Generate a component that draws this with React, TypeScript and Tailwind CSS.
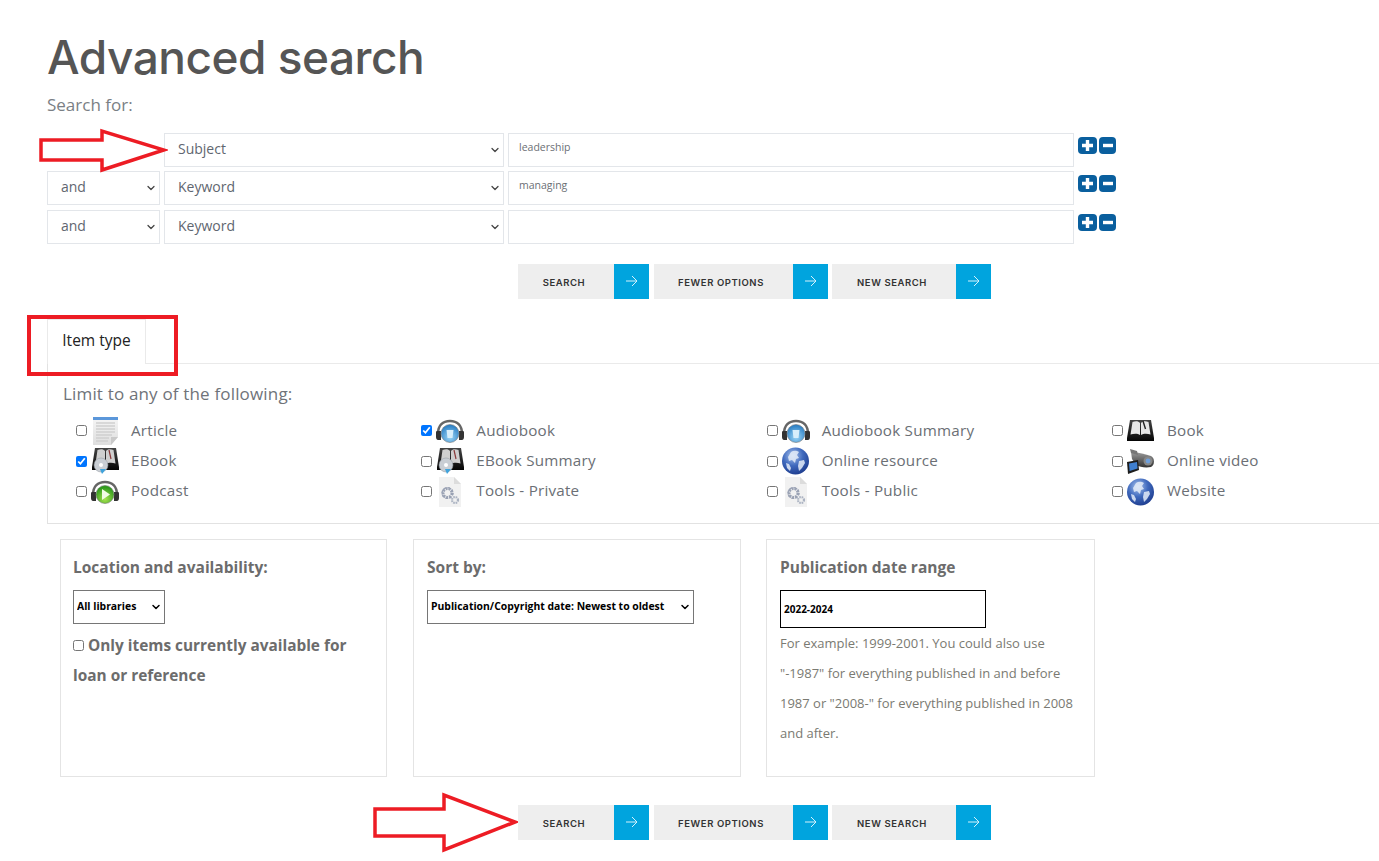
import { ChevronDown } from "lucide-react";

const bodyFont = "font-['Open_Sans','Noto_Sans',sans-serif]";

function IconDefs() {
  return (
    <svg className="absolute h-0 w-0" aria-hidden="true">
      <defs>
        <radialGradient id="globeFill" cx="40%" cy="30%" r="75%">
          <stop offset="0%" stopColor="#a9c4ee" />
          <stop offset="50%" stopColor="#3f69bd" />
          <stop offset="100%" stopColor="#1c3a8c" />
        </radialGradient>
        <radialGradient id="blueCup" cx="50%" cy="70%" r="65%">
          <stop offset="0%" stopColor="#9cd6f7" />
          <stop offset="100%" stopColor="#2b7fc4" />
        </radialGradient>
        <radialGradient id="greenCup" cx="50%" cy="75%" r="65%">
          <stop offset="0%" stopColor="#a6e34f" />
          <stop offset="100%" stopColor="#2f9a1d" />
        </radialGradient>
        <linearGradient id="bookFill" x1="0" y1="0" x2="0" y2="1">
          <stop offset="0%" stopColor="#444" />
          <stop offset="100%" stopColor="#050505" />
        </linearGradient>
        <linearGradient id="paperFill" x1="0" y1="0" x2="0" y2="1">
          <stop offset="0%" stopColor="#f6f6f6" />
          <stop offset="100%" stopColor="#dedede" />
        </linearGradient>
        <linearGradient id="camFill" x1="0" y1="0" x2="0" y2="1">
          <stop offset="0%" stopColor="#9a9a9a" />
          <stop offset="100%" stopColor="#333" />
        </linearGradient>
      </defs>
    </svg>
  );
}

function ArticleIcon() {
  return (
    <svg width="27" height="28" viewBox="0 0 27 28">
      <path d="M1 0h25v20l-7 8H1z" fill="url(#paperFill)" />
      <path d="M1 0h25v3H1z" fill="#5b97da" />
      <path d="M4 6h19M4 9h19M4 12h19M4 15h19M4 18h16M4 21h13M4 24h12" stroke="#cfcfcf" strokeWidth="1.4" />
      <path d="M26 20l-7 8v-8z" fill="#c9c9c9" />
    </svg>
  );
}

function BookIcon() {
  return (
    <svg width="27" height="21" viewBox="0 0 27 21">
      <path d="M3 0h21l3 18v3H0v-3z" fill="url(#bookFill)" />
      <path d="M5.500 2c3-1 6-1 7.500 1v12c-2-1.500-6-1.500-9.500-.5zM21.500 2c-3-1-6-1-7.500 1v12c2-1.500 6.500-1.500 9.500-.5z" fill="#e6e6e6" />
      <path d="M16 1l2.500 8" stroke="#222" strokeWidth="1.4" />
    </svg>
  );
}

function EBookIcon() {
  return (
    <svg width="27" height="26" viewBox="0 0 27 26">
      <path d="M3 0h21l3 19v3H0v-3z" fill="url(#bookFill)" />
      <path d="M5.500 2c3-1 6-1 7.500 1v13c-2-1.500-6-1.500-9.500-.5zM21.500 2c-3-1-6-1-7.500 1v13c2-1.500 6.500-1.500 9.500-.5z" fill="#cfcfcf" />
      <path d="M17 2l2 9" stroke="#8a3a3a" strokeWidth="1.2" />
      <circle cx="9" cy="17" r="7" fill="#c9ced4" stroke="#8c949c" strokeWidth="0.5" />
      <circle cx="9" cy="17" r="2" fill="#fff" />
      <path d="M8 21l6 0-4 5z" fill="#3fa3dc" />
    </svg>
  );
}

function HeadphonesIcon({ variant }: { variant: "blue" | "green" }) {
  return (
    <svg width="28" height="24" viewBox="0 0 28 24">
      <path d="M2 15C2 6 7 2 14 2s12 4 12 13" fill="none" stroke="#666" strokeWidth="2.6" />
      <path d="M1 12h4v9H2c-1 0-2-1-2-3v-4c0-1 0-2 1-2zM27 12h-4v9h3c1 0 2-1 2-3v-4c0-1 0-2-1-2z" fill="#333" />
      <circle cx="14" cy="14.500" r="9" fill={variant === "blue" ? "url(#blueCup)" : "url(#greenCup)"} stroke="#777" strokeWidth="0.6" />
      {variant === "blue" ? (
        <path d="M10.500 11h7l-1 8h-5z" fill="#d7eefb" />
      ) : (
        <path d="M11 9l8 5.500-8 5.500z" fill="#f2fbe4" />
      )}
    </svg>
  );
}

function GearsIcon() {
  return (
    <svg width="24" height="30" viewBox="0 0 24 30">
      <path d="M1 0h15l7 7v23H1z" fill="#f1f1f1" />
      <path d="M16 0l7 7h-7z" fill="#dcdcdc" />
      <circle cx="9.500" cy="16" r="4.500" fill="none" stroke="#9aa2b4" strokeWidth="3" strokeDasharray="2.2 0.9" />
      <circle cx="9.500" cy="16" r="5.400" fill="none" stroke="#9aa2b4" strokeWidth="1.4" strokeDasharray="2 2.2" />
      <circle cx="17" cy="23" r="3" fill="none" stroke="#aab2c1" strokeWidth="2.2" strokeDasharray="1.6 0.8" />
    </svg>
  );
}

function GlobeIcon() {
  return (
    <svg width="27" height="28" viewBox="0 0 27 28">
      <circle cx="13.500" cy="14" r="13.500" fill="url(#globeFill)" />
      <path d="M9 5c3-2 6-1 8 0l-2 3 2 3-3 1-1 4-3-3-3 1-1-4zM17 14l5-1 1 3-3 5-3 3-1-5zM4 16l3 1 2 4-1 3-3-3z" fill="#e4ecf8" opacity="0.85" />
    </svg>
  );
}

function VideoIcon() {
  return (
    <svg width="28" height="25" viewBox="0 0 28 25">
      <path d="M4 3c6 0 13 2 20 4 4 2 4 9 0 11-6 1-11 0-15-2L5 10z" fill="url(#camFill)" />
      <path d="M3 0l7 2 1 4-7-2z" fill="#777" />
      <circle cx="21" cy="12" r="4.500" fill="#888" />
      <circle cx="21" cy="12" r="2.400" fill="#6fa0dc" />
      <path d="M0 13l11-2 1 10-11 4z" fill="#1d1d1d" />
      <path d="M2 14.500l8-1.500.6 6.500-8 2.500z" fill="#3f7fd0" />
    </svg>
  );
}

const itemTypes = [
  { label: "Article", icon: <ArticleIcon /> },
  { label: "Audiobook", icon: <HeadphonesIcon variant="blue" />, checked: true },
  { label: "Audiobook Summary", icon: <HeadphonesIcon variant="blue" /> },
  { label: "Book", icon: <BookIcon /> },
  { label: "EBook", icon: <EBookIcon />, checked: true },
  { label: "EBook Summary", icon: <EBookIcon /> },
  { label: "Online resource", icon: <GlobeIcon /> },
  { label: "Online video", icon: <VideoIcon /> },
  { label: "Podcast", icon: <HeadphonesIcon variant="green" /> },
  { label: "Tools - Private", icon: <GearsIcon /> },
  { label: "Tools - Public", icon: <GearsIcon /> },
  { label: "Website", icon: <GlobeIcon /> },
];

function RowSelect({ value, width }: { value: string; width: string }) {
  return (
    <div className={`relative h-full ${width}`}>
      <select
        defaultValue={value}
        className="h-full w-full appearance-none border border-[#e3e6ea] bg-white pb-[3px] pl-[13px] text-[14px] text-[#5f6670] outline-none"
      >
        <option>{value}</option>
      </select>
      <ChevronDown size={12} strokeWidth={2.5} className="pointer-events-none absolute top-[11px] right-[3px] text-[#444]" />
    </div>
  );
}

function FormSelect({ value, width }: { value: string; width: string }) {
  return (
    <div className={`relative mt-[11px] h-[34px] ${width}`}>
      <select
        defaultValue={value}
        className="h-full w-full appearance-none border border-[#767676] bg-white pl-[3px] text-[10.4px] font-bold text-black"
      >
        <option>{value}</option>
      </select>
      <ChevronDown size={12} strokeWidth={3} className="pointer-events-none absolute top-[11px] right-[3px] text-black" />
    </div>
  );
}

function SearchRow({ joiner, field, value }: { joiner?: string; field: string; value: string }) {
  return (
    <div className="flex h-[34px] gap-1">
      {joiner ? <RowSelect value={joiner} width="w-[113px]" /> : <div className="w-[113px]" />}
      <RowSelect value={field} width="w-[340px]" />
      <input
        readOnly
        value={value}
        className="h-full w-[566px] border border-[#e3e6ea] bg-white px-[10px] pb-[7px] text-[10.5px] text-[#6b6f75] outline-none"
      />
      <div className="flex gap-[2px] pt-[4px]">
        <button className="flex h-[17px] w-[19px] items-center justify-center rounded-[4px] bg-[#0a5f9e]">
          <svg width="13" height="13" viewBox="0 0 13 13">
            <path d="M6.500 1v11M1 6.500h11" stroke="#fff" strokeWidth="3.400" />
          </svg>
        </button>
        <button className="flex h-[17px] w-[17px] items-center justify-center rounded-[4px] bg-[#0a5f9e]">
          <svg width="12" height="11" viewBox="0 0 12 11">
            <path d="M1 5.500h10" stroke="#fff" strokeWidth="3.400" />
          </svg>
        </button>
      </div>
    </div>
  );
}

function ArrowButton({ label, width }: { label: string; width: string }) {
  return (
    <button className={`flex h-[35px] ${width} bg-[#eeeeee]`}>
      <span className="flex flex-1 items-center justify-center pt-[3px] pr-[4px] font-['Inter',sans-serif] text-[9.5px] font-semibold tracking-[0.06em] text-[#333] uppercase">
        {label}
      </span>
      <span className="flex h-full w-[35px] items-center justify-center bg-[#00a4de]">
        <svg width="13" height="12" viewBox="0 0 13 12" fill="none" stroke="#d4f1fb" strokeWidth="1">
          <path d="M1 6h11M7 1l5 5-5 5" />
        </svg>
      </span>
    </button>
  );
}

function ButtonBar() {
  return (
    <div className="ml-[471px] flex gap-[4.5px]">
      <ArrowButton label="Search" width="w-[131px]" />
      <ArrowButton label="Fewer options" width="w-[174px]" />
      <ArrowButton label="New search" width="w-[159px]" />
    </div>
  );
}

export default function App() {
  return (
    <div className={`relative h-[861px] w-[1379px] overflow-hidden bg-white pl-[47px] ${bodyFont}`}>
      <IconDefs />
      <h1 className="pt-[27px] font-['Inter',sans-serif] text-[46px] leading-[60px] font-medium tracking-[-0.5px] text-[#555555]">
        Advanced search
      </h1>
      <p className="mt-[6px] text-[17px] leading-[24px] text-[#7a7f85]">Search for:</p>

      <div className="mt-[16px] flex flex-col gap-[4.4px]">
        <SearchRow field="Subject" value="leadership" />
        <SearchRow joiner="and" field="Keyword" value="managing" />
        <SearchRow joiner="and" field="Keyword" value="" />
      </div>

      <div className="mt-[20px]">
        <ButtonBar />
      </div>

      <div className="mt-[20px] flex h-[45px]">
        <div className="flex w-[99px] items-center justify-center border-x border-t border-[#eaeaea] pb-[2px] text-[15.5px] text-[#222]">
          Item type
        </div>
        <div className="flex-1 border-b border-[#eaeaea]" />
      </div>

      <div className="h-[160px] border-b border-l border-[#e2e2e2] pt-[18px] pl-[15px]">
        <p className="text-[17px] leading-[24px] tracking-[0.01em] text-[#6f7379]">Limit to any of the following:</p>
        <div className="mt-[10px] ml-[13px] grid grid-cols-[repeat(4,345.33px)] auto-rows-[30.3px]">
          {itemTypes.map((item) => (
            <label key={item.label} className="flex items-center">
              <input
                type="checkbox"
                readOnly
                checked={!!item.checked}
                className="h-[11px] w-[11px] accent-[#0075ff]"
              />
              <span className="ml-[4px] flex w-[28px] justify-center">{item.icon}</span>
              <span className="ml-[12px] pb-[2px] text-[15.2px] tracking-[0.015em] text-[#6b6f75]">{item.label}</span>
            </label>
          ))}
        </div>
      </div>

      <div className="mt-[15px] flex h-[238px] pl-[13px]">
        <div className="w-[327px] border border-[#e4e4e4] pt-[15px] pl-[12px]">
          <h3 className="text-[15.5px] leading-[24px] font-bold text-[#6c6c6c]">Location and availability:</h3>
          <FormSelect value="All libraries" width="w-[92px]" />
          <label className="mt-[7px] block pr-[20px] text-[15.4px] leading-[30px] font-bold text-[#6c6c6c]">
            <input type="checkbox" readOnly checked={false} className="mr-[4px] h-[11px] w-[11px]" />
            Only items currently available for loan or reference
          </label>
        </div>
        <div className="mr-[25px] ml-[26px] w-[328px] border border-[#e4e4e4] pt-[15px] pl-[13px]">
          <h3 className="text-[15.5px] leading-[24px] font-bold text-[#6c6c6c]">Sort by:</h3>
          <FormSelect value="Publication/Copyright date: Newest to oldest" width="w-[267px]" />
        </div>
        <div className="w-[329px] border border-[#e4e4e4] pt-[15px] pl-[13px]">
          <h3 className="text-[15.5px] leading-[24px] font-bold text-[#6c6c6c]">Publication date range</h3>
          <input
            readOnly
            value="2022-2024"
            className="mt-[11px] h-[38px] w-[206px] border border-black bg-white px-[3px] text-[10px] font-bold text-black outline-none"
          />
          <p className="pr-[10px] text-[13px] leading-[30px] text-[#7a7a72]">
            For example: 1999-2001. You could also use "-1987" for everything published in and before 1987 or "2008-" for everything published in 2008 and after.
          </p>
        </div>
      </div>

      <div className="mt-[28px]">
        <ButtonBar />
      </div>

      {/* red annotations drawn over the screenshot */}
      <svg className="absolute top-[128px] left-[38px]" width="130" height="46" viewBox="0 0 130 46" fill="#fff" stroke="#ed1c24" strokeWidth="3.500">
        <path d="M3 12h61V3l62 19-62 20V32H3z" />
      </svg>
      <div className="absolute top-[315px] left-[27px] h-[61px] w-[151px] border-4 border-[#ed1c24]" />
      <svg className="absolute top-[792px] left-[372px]" width="146" height="62" viewBox="0 0 146 62" fill="#fff" stroke="#ed1c24" strokeWidth="3.500">
        <path d="M3 17h69V3l71 27-71 28V44H3z" />
      </svg>
    </div>
  );
}
